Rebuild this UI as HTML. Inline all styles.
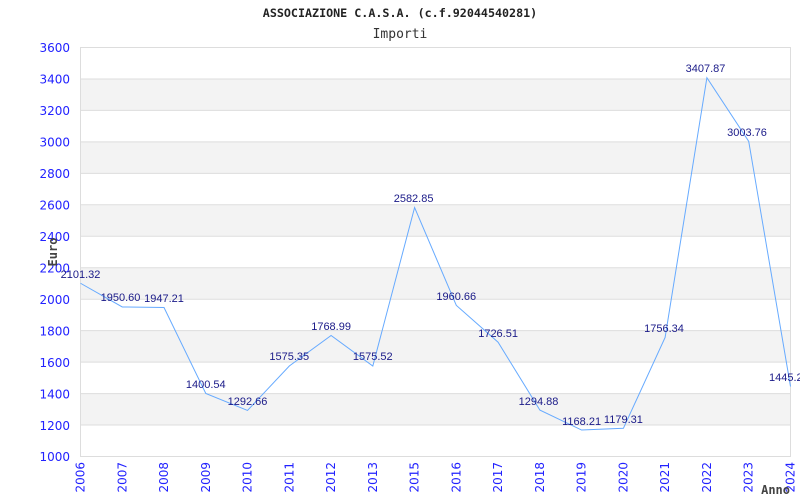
<!DOCTYPE html>
<html><head><meta charset="utf-8"><style>
html,body{margin:0;padding:0;background:#fff;width:800px;height:500px;overflow:hidden}
svg{display:block}
.yl{font-family:"DejaVu Sans",sans-serif;font-size:12px;fill:#2222ff}
.dl{font-family:"Liberation Sans",sans-serif;font-size:11px;fill:#1a1a88}
</style></head><body>
<svg width="800" height="500" viewBox="0 0 800 500" xmlns="http://www.w3.org/2000/svg">
<g fill="#f3f3f3">
<rect x="80.5" y="78.96" width="710" height="31.46"/>
<rect x="80.5" y="141.88" width="710" height="31.46"/>
<rect x="80.5" y="204.8" width="710" height="31.46"/>
<rect x="80.5" y="267.73" width="710" height="31.46"/>
<rect x="80.5" y="330.65" width="710" height="31.46"/>
<rect x="80.5" y="393.58" width="710" height="31.46"/>
</g>
<g stroke="#dddddd" stroke-width="1">
<line x1="80.5" x2="790.5" y1="78.96" y2="78.96"/>
<line x1="80.5" x2="790.5" y1="110.42" y2="110.42"/>
<line x1="80.5" x2="790.5" y1="141.88" y2="141.88"/>
<line x1="80.5" x2="790.5" y1="173.34" y2="173.34"/>
<line x1="80.5" x2="790.5" y1="204.8" y2="204.8"/>
<line x1="80.5" x2="790.5" y1="236.27" y2="236.27"/>
<line x1="80.5" x2="790.5" y1="267.73" y2="267.73"/>
<line x1="80.5" x2="790.5" y1="299.19" y2="299.19"/>
<line x1="80.5" x2="790.5" y1="330.65" y2="330.65"/>
<line x1="80.5" x2="790.5" y1="362.11" y2="362.11"/>
<line x1="80.5" x2="790.5" y1="393.58" y2="393.58"/>
<line x1="80.5" x2="790.5" y1="425.04" y2="425.04"/>
<rect x="80.5" y="47.5" width="710" height="409" fill="none"/>
</g>
<g class="yl" text-anchor="end">
<text x="70" y="52">3600</text><text x="70" y="83.5">3400</text><text x="70" y="115">3200</text>
<text x="70" y="146.5">3000</text><text x="70" y="178">2800</text><text x="70" y="209.5">2600</text>
<text x="70" y="241">2400</text><text x="70" y="272.5">2200</text><text x="70" y="304">2000</text>
<text x="70" y="335.5">1800</text><text x="70" y="367">1600</text><text x="70" y="398.5">1400</text>
<text x="70" y="430">1200</text><text x="70" y="461">1000</text>
</g>
<g class="yl" text-anchor="end">
<text transform="translate(84.5,462) rotate(-90)">2006</text>
<text transform="translate(126.3,462) rotate(-90)">2007</text>
<text transform="translate(168,462) rotate(-90)">2008</text>
<text transform="translate(209.8,462) rotate(-90)">2009</text>
<text transform="translate(251.5,462) rotate(-90)">2010</text>
<text transform="translate(293.3,462) rotate(-90)">2011</text>
<text transform="translate(335.1,462) rotate(-90)">2012</text>
<text transform="translate(376.8,462) rotate(-90)">2013</text>
<text transform="translate(418.6,462) rotate(-90)">2015</text>
<text transform="translate(460.3,462) rotate(-90)">2016</text>
<text transform="translate(502.1,462) rotate(-90)">2017</text>
<text transform="translate(543.9,462) rotate(-90)">2018</text>
<text transform="translate(585.6,462) rotate(-90)">2019</text>
<text transform="translate(627.4,462) rotate(-90)">2020</text>
<text transform="translate(669.1,462) rotate(-90)">2021</text>
<text transform="translate(710.9,462) rotate(-90)">2022</text>
<text transform="translate(752.7,462) rotate(-90)">2023</text>
<text transform="translate(794.5,462) rotate(-90)">2024</text>
</g>
<polyline fill="none" stroke="#66aaff" stroke-width="1" points="80.5,283.25 122.3,306.96 164,307.5 205.8,393.5 247.5,410.46 289.3,366 331.1,335.53 372.8,366 414.6,207.5 456.3,305.38 498.1,342.2 539.9,410.1 581.6,430.04 623.4,428.3 665.1,337.5 706.9,77.7 748.7,141.3 790.5,386.5"/>
<g class="dl" text-anchor="middle">
<text x="80.5" y="278">2101.32</text>
<text x="120.5" y="301">1950.60</text>
<text x="164" y="302">1947.21</text>
<text x="205.8" y="388">1400.54</text>
<text x="247.5" y="405">1292.66</text>
<text x="289.3" y="360">1575.35</text>
<text x="331.1" y="330">1768.99</text>
<text x="372.8" y="360">1575.52</text>
<text x="413.6" y="202">2582.85</text>
<text x="456.3" y="300">1960.66</text>
<text x="498.1" y="337">1726.51</text>
<text x="538.5" y="405">1294.88</text>
<text x="581.6" y="425">1168.21</text>
<text x="623.4" y="423">1179.31</text>
<text x="664" y="332">1756.34</text>
<text x="705.5" y="72">3407.87</text>
<text x="747" y="136">3003.76</text>
<text x="769" y="381" text-anchor="start">1445.2</text>
</g>
<text x="400" y="17" text-anchor="middle" font-family="'DejaVu Sans Mono','Liberation Mono',monospace" font-weight="bold" font-size="11.7" fill="#222">ASSOCIAZIONE C.A.S.A. (c.f.92044540281)</text>
<text x="400" y="38" text-anchor="middle" font-family="'DejaVu Sans Mono','Liberation Mono',monospace" font-size="13" fill="#333">Importi</text>
<text transform="translate(57,252) rotate(-90)" text-anchor="middle" font-family="'DejaVu Sans Mono',monospace" font-weight="bold" font-size="12" fill="#444">Euro</text>
<text x="790" y="494" text-anchor="end" font-family="'DejaVu Sans Mono',monospace" font-weight="bold" font-size="12" fill="#444">Anno</text>
</svg>
</body></html>
